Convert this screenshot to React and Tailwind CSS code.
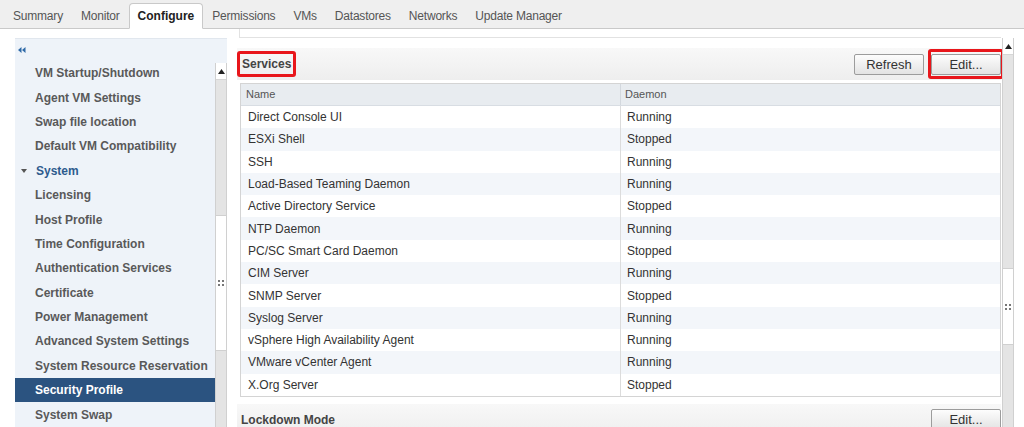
import React from 'react'

const TABS = ['Summary', 'Monitor', 'Configure', 'Permissions', 'VMs', 'Datastores', 'Networks', 'Update Manager']

const NAV = [
  { label: 'VM Startup/Shutdown' },
  { label: 'Agent VM Settings' },
  { label: 'Swap file location' },
  { label: 'Default VM Compatibility' },
  { label: 'System', group: true },
  { label: 'Licensing' },
  { label: 'Host Profile' },
  { label: 'Time Configuration' },
  { label: 'Authentication Services' },
  { label: 'Certificate' },
  { label: 'Power Management' },
  { label: 'Advanced System Settings' },
  { label: 'System Resource Reservation' },
  { label: 'Security Profile', active: true },
  { label: 'System Swap' },
]

const SERVICES = [
  ['Direct Console UI', 'Running'],
  ['ESXi Shell', 'Stopped'],
  ['SSH', 'Running'],
  ['Load-Based Teaming Daemon', 'Running'],
  ['Active Directory Service', 'Stopped'],
  ['NTP Daemon', 'Running'],
  ['PC/SC Smart Card Daemon', 'Stopped'],
  ['CIM Server', 'Running'],
  ['SNMP Server', 'Stopped'],
  ['Syslog Server', 'Running'],
  ['vSphere High Availability Agent', 'Running'],
  ['VMware vCenter Agent', 'Running'],
  ['X.Org Server', 'Stopped'],
]

function Grip() {
  return (
    <div className="grid grid-cols-2 gap-[2px]">
      {[0, 1, 2, 3].map((i) => (
        <span key={i} className="w-[2px] h-[2px] bg-[#777]" />
      ))}
    </div>
  )
}

function UpArrow() {
  return (
    <div className="h-[17px] shrink-0 bg-white border-b border-[#d6d6d6] flex items-center justify-center">
      <svg width="7" height="5" viewBox="0 0 7 5">
        <path d="M3.5 0 L7 5 L0 5 Z" fill="#222" />
      </svg>
    </div>
  )
}

function Button({ children }) {
  return (
    <button className="h-[21px] w-[70px] border border-[#9c9c9c] rounded-[2px] bg-gradient-to-b from-[#fdfdfd] to-[#e3e3e3] text-[13px] text-[#333] leading-none">
      {children}
    </button>
  )
}

function SectionBar({ title, outlined, children }) {
  return (
    <div className="h-[32px] flex items-center justify-between bg-gradient-to-b from-[#f8f8f8] to-[#eeeeee]">
      {outlined ? (
        <div className="h-[26px] flex items-center px-[2px] border-[3px] border-[#e8161b] rounded-[3px]">
          <span className="text-[12px] font-bold text-[#444]">{title}</span>
        </div>
      ) : (
        <span className="pl-[4px] text-[12px] font-bold text-[#444]">{title}</span>
      )}
      <div className="flex items-center gap-[4px]">{children}</div>
    </div>
  )
}

export default function App() {
  return (
    <div className="w-[1024px] h-[427px] overflow-hidden bg-white font-['Liberation_Sans',Arial,sans-serif] flex flex-col">
      {/* Tabs */}
      <div className="h-[29px] shrink-0 bg-[#efefef] border-b border-[#c9c9c9] flex items-end pl-[4px]">
        {TABS.map((t) =>
          t === 'Configure' ? (
            <div
              key={t}
              className="h-[26px] px-[8px] -mb-px bg-white border border-[#c9c9c9] border-b-white rounded-t-[4px] flex items-center text-[12px] font-bold text-[#222]"
            >
              {t}
            </div>
          ) : (
            <div key={t} className="h-[25px] px-[9px] flex items-center text-[12px] tracking-[-0.2px] text-[#555]">
              {t}
            </div>
          )
        )}
      </div>

      <div className="flex-1 flex min-h-0">
        {/* Sidebar */}
        <div className="ml-[15px] mt-[9px] w-[212px] bg-[#eef3f9] border-t border-[#e1e7ee] flex flex-col">
          <div className="h-[22px] shrink-0 flex items-center pl-[3px]">
            <svg width="8" height="6" viewBox="0 0 8 6">
              <path d="M0 3 L3.5 0 L3.5 6 Z M4 3 L7.5 0 L7.5 6 Z" fill="#2f6aa8" />
            </svg>
          </div>
          <div className="flex-1 flex min-h-0">
            <div className="w-[200px] flex flex-col">
              {NAV.map((n) => (
                <div
                  key={n.label}
                  className={`h-[24.4px] shrink-0 flex items-center text-[12px] font-bold ${
                    n.active ? 'bg-[#2b5380] text-white' : n.group ? 'text-[#2d5b8e]' : 'text-[#595959]'
                  }`}
                >
                  {n.group ? (
                    <>
                      <svg className="ml-[6px] mr-[9px]" width="6" height="4" viewBox="0 0 6 4">
                        <path d="M0 0 L6 0 L3 4 Z" fill="#555" />
                      </svg>
                      {n.label}
                    </>
                  ) : (
                    <span className="pl-[20px]">{n.label}</span>
                  )}
                </div>
              ))}
            </div>
            <div className="w-[12px] mt-[2px] border-x border-[#d0d0d0] bg-[#e4e4e4] flex flex-col">
              <UpArrow />
              <div className="h-[135px] shrink-0" />
              <div className="h-[136px] shrink-0 bg-white border-y border-[#d0d0d0] flex items-center justify-center">
                <Grip />
              </div>
            </div>
          </div>
        </div>

        {/* Main */}
        <div className="ml-[10px] w-[764px] flex flex-col">
          <div className="h-[9px] shrink-0 ml-[2px] border-l border-b border-[#e2e2e2]" />
          <div className="mt-[10px]">
            <SectionBar title="Services" outlined>
              <Button>Refresh</Button>
              <div className="-mr-[3px] border-[3px] border-[#e8161b] rounded-[3px]">
                <Button>Edit...</Button>
              </div>
            </SectionBar>
          </div>

          <div className="mt-[3px] ml-[3px] border border-[#d4d4d4] text-[12px] text-[#333]">
            <div className="h-[22px] flex bg-[#e8ecf0] border-b border-[#d8dde3] text-[11px] text-[#555]">
              <div className="w-[380px] pl-[5px] flex items-center border-r border-[#d3d8de]">Name</div>
              <div className="flex-1 pl-[4px] flex items-center">Daemon</div>
            </div>
            {SERVICES.map(([name, state], i) => (
              <div key={name} className={`h-[22.3px] flex ${i % 2 ? 'bg-[#f3f6fa]' : 'bg-white'}`}>
                <div className="w-[380px] pl-[7px] flex items-center border-r border-[#dcdcdc]">{name}</div>
                <div className="flex-1 pl-[6px] flex items-center">{state}</div>
              </div>
            ))}
          </div>

          <div className="mt-[7px]">
            <SectionBar title="Lockdown Mode">
              <Button>Edit...</Button>
            </SectionBar>
          </div>
        </div>

        {/* Right scrollbar */}
        <div className="ml-[1px] mt-[9px] w-[12px] border-x border-[#d0d0d0] bg-[#e4e4e4] flex flex-col">
          <UpArrow />
          <div className="h-[213px] shrink-0" />
          <div className="h-[77px] shrink-0 bg-white border-y border-[#d0d0d0] flex items-center justify-center">
            <Grip />
          </div>
        </div>
      </div>
    </div>
  )
}
